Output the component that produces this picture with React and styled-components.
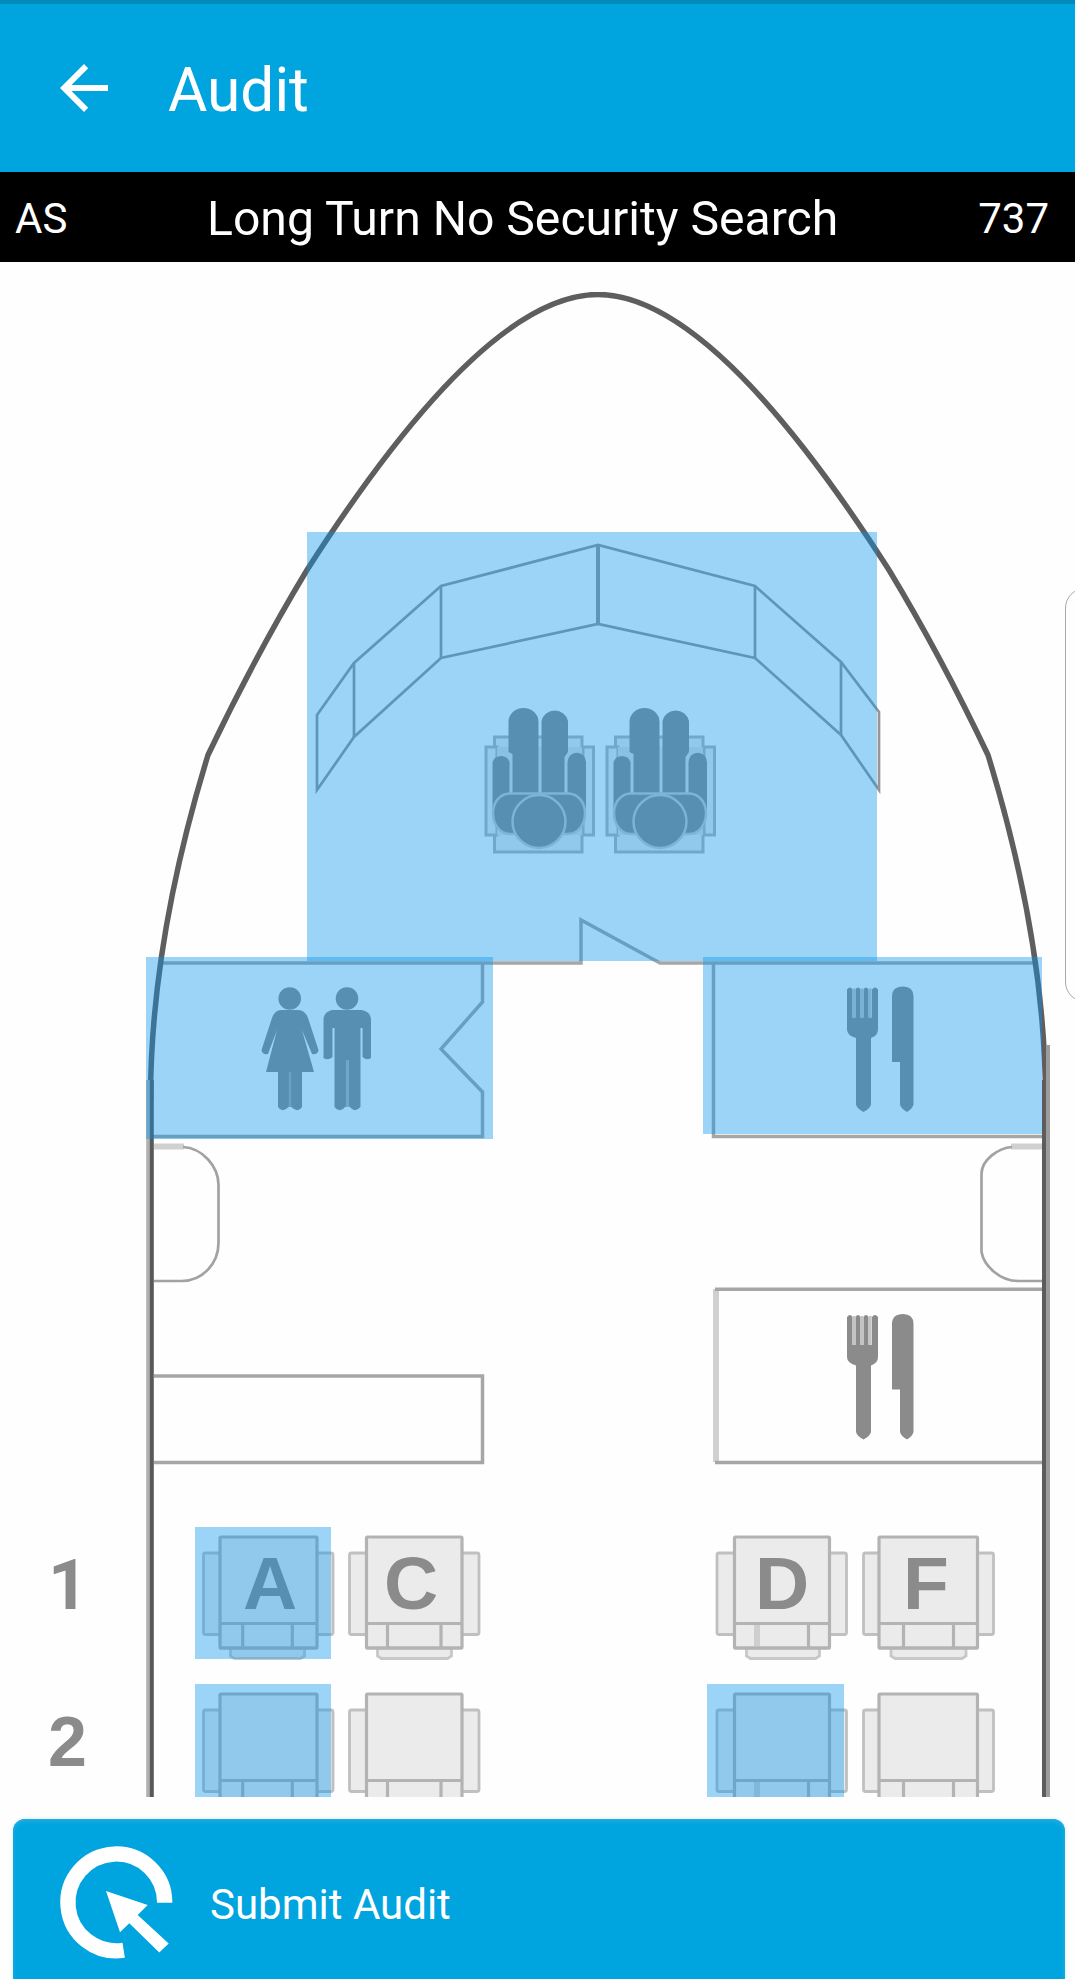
import React from "react";
import styled, { createGlobalStyle } from "styled-components";

const GlobalStyle = createGlobalStyle`
  html, body { margin: 0; padding: 0; background: #fefefe; }
  * { box-sizing: border-box; }
`;

const BLUE = "#00a4de";
const LINE = "#a6a6a6";
const INK = "#8b8b8b";
const PLAN_TOP = 292;

const Screen = styled.div`
  position: relative;
  width: 1075px;
  height: 1979px;
  overflow: hidden;
  display: flex;
  flex-direction: column;
  background: #fefefe;
  color: #fff;
  font-family: Roboto, "Liberation Sans", sans-serif;
`;

const AppBar = styled.header`
  flex: none;
  height: 172px;
  border-top: 4px solid #008bbb;
  background: ${BLUE};
  display: flex;
  align-items: center;
  gap: 48px;
  padding: 0 48px;
`;

const BackButton = styled.button`
  width: 72px;
  height: 72px;
  padding: 0;
  border: 0;
  background: none;
  color: #fff;
  svg { display: block; }
`;

const Title = styled.h1`
  margin: 0;
  padding-top: 6px;
  font-size: 60.4px;
  line-height: 72px;
  font-weight: 400;
`;

const FlightBar = styled.div`
  flex: none;
  height: 90px;
  background: #000;
  display: flex;
  align-items: center;
  padding: 3px 26px 0 15px;
  font-size: 42px;
`;

const Carrier = styled.span`
  width: 192px;
`;

const FlightType = styled.span`
  flex: 1;
  font-size: 48.1px;
`;

const Deck = styled.main`
  flex: none;
  height: 1535px;
  padding-top: 30px;
`;

const Plan = styled.div`
  position: relative;
  width: 1075px;
  height: 1505px;
  overflow: hidden;
  > svg { display: block; }
`;

const Zone = styled.button`
  position: absolute;
  left: ${(p) => p.$x}px;
  top: ${(p) => p.$y - PLAN_TOP}px;
  width: ${(p) => p.$w}px;
  height: ${(p) => p.$h}px;
  padding: 0;
  border: 0;
  background: rgba(9, 150, 238, 0.4);
`;

const DrawerHandle = styled.div`
  position: absolute;
  left: 1065px;
  top: 588px;
  width: 40px;
  height: 414px;
  border: 1.5px solid #a8a8a8;
  border-radius: 20px;
  background: #fefefe;
`;

const SubmitButton = styled.button`
  flex: none;
  width: 1052px;
  height: 180px;
  margin: 22px 0 0 13px;
  padding: 0 0 14px 43px;
  display: flex;
  align-items: center;
  gap: 34px;
  border: 0;
  border-radius: 12px;
  background: ${BLUE};
  box-shadow: inset 0 2px 4px #2aaee0, 0 0 4px #d5eef8;
  color: #fff;
  font: 400 42px Roboto, "Liberation Sans", sans-serif;
`;

const SubmitLabel = styled.span`
  padding-top: 4px;
`;

const SeatText = styled.text`
  font: bold 75px "Liberation Sans", Arial, sans-serif;
  fill: ${INK};
`;

const RowNumber = styled.text`
  font: bold 70px ${(p) => p.$face}, sans-serif;
  fill: ${INK};
`;

const Hull = () => (
  <g fill="none" stroke="#5e5e5e" strokeWidth="5.500" strokeLinejoin="round">
    <path d="M150.500 1100C150.500 960 185 830 208 755C238 692 275 623 307 570C405 417 510 294.500 598 294.500C686 294.500 791 417 889 570C921 623 958 692 988 755C1011 830 1045.500 960 1045.500 1100" />
    <g strokeWidth="4">
      <path d="M148.200 1080V1797" stroke="#b0b0b0" />
      <path d="M151.800 1080V1797" stroke="#585858" />
      <path d="M1048 1045V1797" stroke="#9c9c9c" />
      <path d="M1044 1080V1797" stroke="#5c5c5c" />
    </g>
  </g>
);

const Cabin = () => (
  <g fill="none" stroke={LINE} strokeWidth="3.500">
    <g stroke="#969696" strokeWidth="2.700">
      <path d="M317 715L354 663L441 586L598 545L755 586L841 662L879 712V790L841 735L755 658L598 624L441 658L354 737L317 790Z" />
      <path d="M354 663V737M441 586V658M755 586V658M841 662V735" />
      <path d="M598 545V624" strokeWidth="4" />
    </g>
    <path d="M160 963H581V920L660 963H1037" />
    <path d="M482.500 963V1002L441 1049L482.500 1092V1136.500H153" />
    <path d="M713.500 963V1136.500H1042" />
    <path d="M154 1146.500H184" stroke="#d0d0d0" strokeWidth="6" />
    <path d="M183 1147C202 1148 218.500 1166 218.500 1185V1243C218.500 1264 202 1281 182 1281H154" stroke="#a2a2a2" strokeWidth="2.700" />
    <path d="M1042 1146.500H1011" stroke="#d0d0d0" strokeWidth="6" />
    <path d="M1012 1147C998 1148 981.500 1160 981.500 1174V1252C984 1266 1000 1281 1018 1281H1042" stroke="#a2a2a2" strokeWidth="2.700" />
    <path d="M154 1376H482.500V1462.500H154" />
    <path d="M716 1289V1462" stroke="#d0d0d0" strokeWidth="6" />
    <path d="M715 1289.200H1042M715 1462.500H1042" />
  </g>
);

const Pilot = ({ dx }) => (
  <g transform={`translate(${dx} 0)`}>
    <g fill="#ebebeb" stroke="#b4b4b4" strokeWidth="3">
      <path d="M494.500 737H582V852H494.500Z" />
      <path d="M486 747H497V835H486ZM583 747H593.500V835H583Z" />
    </g>
    <path d="M497 747H582V835H497Z" fill="#dedede" />
    <g fill={INK}>
      <path d="M508.500 722A15 14 0 0 1 538.500 722V795H512.500V754L508.500 752Z" />
      <path d="M541.500 721A13.500 13 0 0 1 568 721V752L564.500 757V795H541.500Z" />
      <path d="M492.500 762A9 9 0 0 1 509.500 762V812H492.500Z" />
      <path d="M567.500 762A9 9 0 0 1 586 762V812H567.500Z" />
      <path d="M509 793.500H569C579 794.500 585 803 585 813C585 825 578 834 567 834H511C500 834 493 825 493 813C493 803 499 794.500 509 793.500Z" stroke="#c8c8c8" strokeWidth="2.500" />
      <circle cx="539" cy="821.500" r="26.500" stroke="#c8c8c8" strokeWidth="2.500" />
    </g>
  </g>
);

const Cutlery = ({ dy }) => (
  <g fill={INK} transform={`translate(0 ${dy})`}>
    <path d="M847 1317Q850 1313 852.500 1317V1345H855.500V1317Q858 1313 860.500 1317V1345H863.500V1317Q866 1313 868.500 1317V1345H872V1317Q875 1313 878 1317V1357Q878 1363 871 1365.500V1432Q870 1436 863.500 1439.500Q857 1436 856 1432V1365.500Q847 1363 847 1357Z" />
    <path d="M854 1316V1345M862 1316V1345M870.200 1316V1345" stroke="#c4c4c4" strokeWidth="3" />
    <path d="M892 1324Q892 1314 903 1314Q913.500 1314 913.500 1324V1432Q912.500 1436 907 1439.500Q901 1436 900 1432V1389.500H892Z" />
  </g>
);

const Restroom = () => (
  <g fill={INK}>
    <circle cx="289.700" cy="998.500" r="11.300" />
    <path d="M281 1010H298Q305 1010 308 1018L318.500 1050Q318 1055 312 1054L302 1030L314 1072H302V1107Q299 1112 294 1109L290 1106L286 1109Q281 1112 278 1107V1072H266L277 1030L268 1054Q262 1055 261.500 1050L272 1018Q275 1010 281 1010Z" />
    <path d="M290 1072V1107" stroke="#a8a8a8" strokeWidth="2.500" />
    <circle cx="347" cy="998.500" r="11.300" />
    <path d="M332 1010H362Q371 1012 371 1020V1058Q367 1061 362.500 1057V1028H360.500V1107Q356 1112 352 1109L347.500 1105L343 1109Q338 1112 334.500 1107V1028H332.500V1057Q328 1061 323.500 1058V1020Q323.500 1012 332 1010Z" />
    <path d="M347.500 1060V1107" stroke="#b2b2b2" strokeWidth="3" />
  </g>
);

const Seat = ({ y, body, arms, foot, splits, faint }) => (
  <g transform={`translate(0 ${y})`} fill="#ebebeb" stroke="#b3b3b3" strokeWidth="3.200">
    <g strokeWidth="2.800" stroke="#c0c0c0">
      <rect x={arms[0]} y="16" width={arms[1] - arms[0]} height="81.500" rx="2" />
      <path d={`M${foot[0]} 111V119L${foot[0] + 4} 121.500H${foot[1] - 4}L${foot[1]} 119V111Z`} stroke="#c8c8c8" />
    </g>
    <rect x={body[0]} y="0" width={body[1] - body[0]} height="111" rx="1" />
    <path d={`M${splits[0]} 86.500V111`} strokeWidth={faint ? 6 : 3.2} stroke={faint ? "#cfcfcf" : "#b3b3b3"} />
    <path d={`M${splits[1]} 86.500V111`} />
    <path d={`M${body[0]} 86.500H${body[1]}M${body[0]} 111H${body[1]}`} />
  </g>
);

const SEATS = [
  { label: "A", tx: 270, body: [220, 317], arms: [203.5, 333], foot: [230.5, 304.5], splits: [242.7, 292.3] },
  { label: "C", tx: 411, body: [366.5, 462], arms: [349.5, 479], foot: [377.5, 451.5], splits: [387.5, 441] },
  { label: "D", tx: 782, body: [734.5, 829.5], arms: [717, 846.5], foot: [746.5, 819.5], splits: [757, 808.5], faint: true },
  { label: "F", tx: 926, body: [879, 977.5], arms: [863.5, 993.5], foot: [891, 966], splits: [903.5, 953.5] },
];

const ROWS = [
  { number: "1", x: 48, face: "Roboto", y: 1537, labelled: true },
  { number: "2", x: 48, face: '"Liberation Sans"', y: 1694, labelled: false },
];

const ZONES = [
  { id: "Cockpit", x: 307, y: 532, w: 570, h: 429 },
  { id: "Lavatory", x: 146, y: 957, w: 347, h: 182 },
  { id: "Galley", x: 703, y: 957, w: 339, h: 177 },
  { id: "Seat 1A", x: 195, y: 1527, w: 136, h: 132 },
  { id: "Seat 2A", x: 195, y: 1684, w: 136, h: 113 },
  { id: "Seat 2D", x: 707, y: 1684, w: 137, h: 113 },
];

const SeatRow = ({ number, x, face, y, labelled }) => (
  <g>
    <RowNumber $face={face} x={x} y={y + 72}>{number}</RowNumber>
    {SEATS.map(({ label, tx, ...seat }) => (
      <g key={label}>
        <Seat y={y} {...seat} />
        {labelled && <SeatText x={tx} y={y + 72} textAnchor="middle">{label}</SeatText>}
      </g>
    ))}
  </g>
);

export default function App() {
  return (
    <>
      <GlobalStyle />
      <Screen>
        <AppBar>
          <BackButton aria-label="Back">
            <svg width="72" height="72" viewBox="0 0 24 24" fill="currentColor">
              <path d="M20 11H7.830l5.590-5.590L12 4l-8 8 8 8 1.410-1.410L7.830 13H20v-2z" />
            </svg>
          </BackButton>
          <Title>Audit</Title>
        </AppBar>
        <FlightBar>
          <Carrier>AS</Carrier>
          <FlightType>Long Turn No Security Search</FlightType>
          <span>737</span>
        </FlightBar>
        <Deck>
          <Plan>
            <svg width="1075" height="1505" viewBox={`0 ${PLAN_TOP} 1075 1505`}>
              <Cabin />
              <Hull />
              <Pilot dx={0} />
              <Pilot dx={121} />
              <Restroom />
              <Cutlery dy={-327.5} />
              <Cutlery dy={0} />
              {ROWS.map((row) => <SeatRow key={row.number} {...row} />)}
            </svg>
            {ZONES.map((z) => (
              <Zone key={z.id} aria-label={z.id} $x={z.x} $y={z.y} $w={z.w} $h={z.h} />
            ))}
          </Plan>
        </Deck>
        <SubmitButton>
          <svg width="120" height="120" viewBox="56 1842 120 120">
            <path d="M164.700 1902.700A48.400 48.400 0 1 0 123.700 1950.200" fill="none" stroke="#fff" strokeWidth="15.300" />
            <path d="M106 1891L147.700 1905L137.700 1915L168.700 1943.500L159.300 1952.500L129.300 1923.300L120 1932.300Z" fill="#fff" />
          </svg>
          <SubmitLabel>Submit Audit</SubmitLabel>
        </SubmitButton>
        <DrawerHandle />
      </Screen>
    </>
  );
}
